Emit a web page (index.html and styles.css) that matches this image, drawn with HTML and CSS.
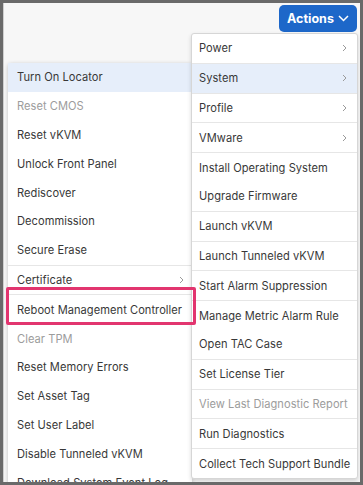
FILE: index.html
```html
<!DOCTYPE html>
<html>
<head>
<meta charset="utf-8">
<link rel="stylesheet" href="styles.css">
</head>
<body>
<div class="frame">
  <div class="toolbar">
    <button class="actions-btn">Actions
      <svg class="caret-down" width="11" height="7" viewBox="0 0 11 7"><polyline points="1,1 5.5,5.5 10,1" fill="none" stroke="#fff" stroke-width="1.5"/></svg>
    </button>
  </div>

  <ul class="menu submenu">
    <li class="item active">Turn On Locator</li>
    <li class="item disabled">Reset CMOS</li>
    <li class="item">Reset vKVM</li>
    <li class="item">Unlock Front Panel</li>
    <li class="item">Rediscover</li>
    <li class="item">Decommission</li>
    <li class="item sep">Secure Erase</li>
    <li class="item sep has-sub">Certificate<svg class="chev" width="5" height="8" viewBox="0 0 5 8"><polyline points="1,1 4,4 1,7" fill="none" stroke="#9a9a9a" stroke-width="1"/></svg></li>
    <li class="item">Reboot Management Controller</li>
    <li class="item disabled">Clear TPM</li>
    <li class="item">Reset Memory Errors</li>
    <li class="item">Set Asset Tag</li>
    <li class="item">Set User Label</li>
    <li class="item">Disable Tunneled vKVM</li>
    <li class="item">Download System Event Log</li>
  </ul>

  <ul class="menu mainmenu">
    <li class="item sep has-sub">Power<svg class="chev" width="5" height="8" viewBox="0 0 5 8"><polyline points="1,1 4,4 1,7" fill="none" stroke="#9a9a9a" stroke-width="1"/></svg></li>
    <li class="item active sep has-sub">System<svg class="chev" width="5" height="8" viewBox="0 0 5 8"><polyline points="1,1 4,4 1,7" fill="none" stroke="#9a9a9a" stroke-width="1"/></svg></li>
    <li class="item sep has-sub">Profile<svg class="chev" width="5" height="8" viewBox="0 0 5 8"><polyline points="1,1 4,4 1,7" fill="none" stroke="#9a9a9a" stroke-width="1"/></svg></li>
    <li class="item sep has-sub">VMware<svg class="chev" width="5" height="8" viewBox="0 0 5 8"><polyline points="1,1 4,4 1,7" fill="none" stroke="#9a9a9a" stroke-width="1"/></svg></li>
    <li class="item">Install Operating System</li>
    <li class="item sep">Upgrade Firmware</li>
    <li class="item sep">Launch vKVM</li>
    <li class="item sep">Launch Tunneled vKVM</li>
    <li class="item sep">Start Alarm Suppression</li>
    <li class="item">Manage Metric Alarm Rule</li>
    <li class="item sep">Open TAC Case</li>
    <li class="item sep">Set License Tier</li>
    <li class="item sep disabled">View Last Diagnostic Report</li>
    <li class="item sep">Run Diagnostics</li>
    <li class="item">Collect Tech Support Bundle</li>
  </ul>

  <div class="annotation"></div>
</div>
</body>
</html>
```

FILE: styles.css
```css
* { box-sizing: border-box; }
html, body { margin: 0; padding: 0; }
body {
  width: 363px;
  height: 485px;
  overflow: hidden;
  font-family: Inter, "Noto Sans", sans-serif;
  background: #6a6a6a;
}
.frame {
  position: relative;
  width: 363px;
  height: 485px;
  border: 3px solid #6a6a6a;
  background: #f7f7f7;
  overflow: hidden;
  box-shadow: inset 1px 0 0 #cfcfcf;
}
.toolbar {
  display: flex;
  justify-content: flex-end;
  padding: 2px 3px 0 0;
}
.actions-btn {
  display: flex;
  align-items: center;
  gap: 4px;
  height: 27px;
  width: 78px;
  justify-content: center;
  border: none;
  border-radius: 5px;
  background: #1d67c9;
  color: #fff;
  font-family: Inter, "Noto Sans", sans-serif;
  font-weight: 700;
  font-size: 12.5px;
  padding: 0 0 1px 0;
}
.caret-down { margin-top: 1px; }
.menu {
  list-style: none;
  margin: 0;
  padding: 0;
  position: absolute;
  background: #fff;
  color: #383838;
  font-size: 11.1px;
  letter-spacing: 0.05px;
}
.submenu {
  left: 5px;
  top: 60px;
  width: 184px;
  box-shadow: 0 1px 4px rgba(0,0,0,0.22);
  border-radius: 3px;
}
.mainmenu {
  left: 188px;
  top: 30px;
  width: 167px;
  border: 1px solid #d6d6d6;
  border-radius: 3px;
  box-shadow: 0 2px 4px rgba(0,0,0,0.15);
}
.item {
  display: flex;
  align-items: center;
  justify-content: space-between;
  height: 28.8px;
  white-space: nowrap;
}
.mainmenu .item { padding: 0 10px 0 7px; }
.submenu .item { padding: 0 8px 0 9px; }
.item.sep { border-bottom: 1px solid #e6e6e6; height: 29.8px; }
.item.active { background: #e6eefa; }
.item.disabled { color: #9c9c9c; }
.chev { flex: none; }
.annotation {
  position: absolute;
  left: 3px;
  top: 284px;
  width: 190px;
  height: 38px;
  border: 3px solid #e2356f;
  border-radius: 2px;
}
```
